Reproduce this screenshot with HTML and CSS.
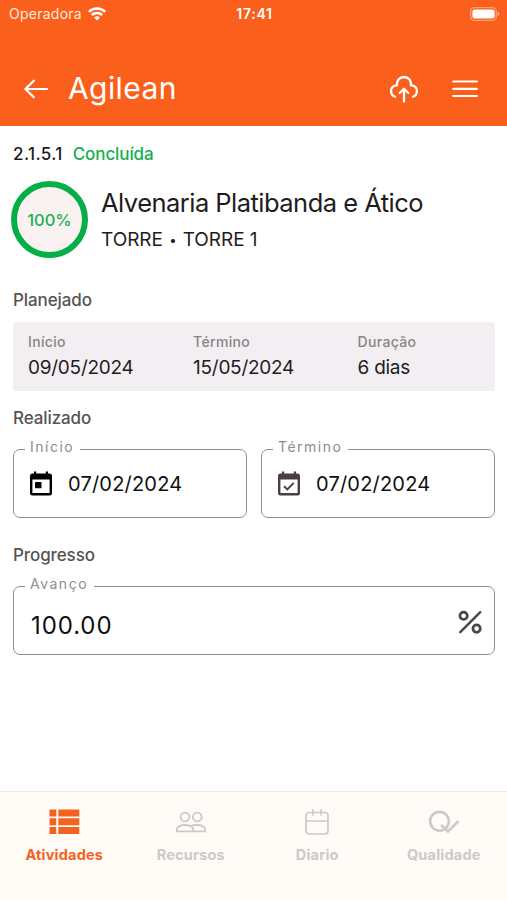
FILE: index.html
```html
<!DOCTYPE html>
<html lang="pt-BR">
<head>
    <meta charset="UTF-8">
    <title>Agilean</title>
    <meta name="viewport" content="width=device-width, initial-scale=1">
    <link rel="stylesheet" href="styles.css">
</head>
<body>
<header class="header">
    <div class="status">
        <div class="carrier">
            <span>Operadora</span>
            <svg width="18" height="14" viewBox="0 0 18 14" fill="none" stroke="#fff" stroke-width="2.5">
                <path d="M.9 4.9a11.6 11.6 0 0 1 16.2 0M3.8 8a7.5 7.5 0 0 1 10.4 0"/>
                <path d="M9 13.6 6.1 10.7a4.2 4.2 0 0 1 5.8 0z" fill="#fff" stroke="none"/>
            </svg>
        </div>
        <span class="clock">17:41</span>
        <svg class="battery" width="30" height="14" viewBox="0 0 30 14">
            <rect x=".7" y=".7" width="25.6" height="12.6" rx="3.8" fill="none" stroke="#fff" stroke-opacity=".4" stroke-width="1.3"/>
            <rect x="2.4" y="2.4" width="22.2" height="9.2" rx="2.3" fill="#fff"/>
            <path d="M27.6 4.8q3.4 2.2 0 4.4z" fill="#fff" fill-opacity=".5"/>
        </svg>
    </div>
    <div class="toolbar">
        <svg width="24" height="20" viewBox="0 0 24 20" fill="none" stroke="#fff" stroke-width="2.2" stroke-linecap="round" stroke-linejoin="round">
            <path d="M23 10H1.4M9.8 1.7 1.4 10l8.4 8.3"/>
        </svg>
        <span class="logo">Agilean</span>
        <svg class="upload" width="30" height="28" viewBox="0 0 30 28" fill="none" stroke="#fff" stroke-width="2.3" stroke-linecap="round" stroke-linejoin="round">
            <path d="M6 21.8C3.4 20.8 2 18.6 2 16c0-3.5 2.6-5.8 6-5.6C7.6 5.4 10.6 2 15 2s7.4 3.4 7 8.4c3.4-.2 6 2.1 6 5.6 0 2.6-1.4 4.8-4 5.8"/>
            <path d="M15 26.5V14M10.7 18l4.3-4.3 4.3 4.3"/>
        </svg>
        <svg width="26" height="20" viewBox="0 0 26 20" stroke="#fff" stroke-width="2.2" stroke-linecap="round">
            <path d="M1.2 2.5h23.6M1.2 9.8h23.6M1.2 17h23.6"/>
        </svg>
    </div>
</header>

<main class="content">
    <div class="code">
        <span>2.1.5.1</span>
        <span class="done">Concluída</span>
    </div>
    <div class="activity">
        <div class="progress">100%</div>
        <div>
            <h1>Alvenaria Platibanda e Ático</h1>
            <p class="place">TORRE <span class="dot">•</span> TORRE 1</p>
        </div>
    </div>

    <h2>Planejado</h2>
    <div class="planned">
        <div>
            <div class="label">Início</div>
            <div class="value">09/05/2024</div>
        </div>
        <div>
            <div class="label">Término</div>
            <div class="value">15/05/2024</div>
        </div>
        <div>
            <div class="label">Duração</div>
            <div class="value">6 dias</div>
        </div>
    </div>

    <h2>Realizado</h2>
    <div class="dates">
        <fieldset>
            <legend>Início</legend>
            <div class="field">
                <svg width="22" height="25" viewBox="0 0 22 25">
                    <path fill="#000" fill-rule="evenodd" d="M4 .5h2.2v2h9.6v-2H18v2h1.5A2.5 2.5 0 0 1 22 5v17a2.5 2.5 0 0 1-2.5 2.5h-17A2.5 2.5 0 0 1 0 22V5a2.5 2.5 0 0 1 2.5-2.5H4zM2.4 8.5v13.6h17.2V8.5z"/>
                    <rect x="5" y="11" width="6.5" height="6.2" rx=".8"/>
                </svg>
                <span>07/02/2024</span>
            </div>
        </fieldset>
        <fieldset>
            <legend>Término</legend>
            <div class="field">
                <svg width="22" height="25" viewBox="0 0 22 25">
                    <path fill="#4a4040" fill-rule="evenodd" d="M4 .5h2.2v2h9.6v-2H18v2h1.5A2.5 2.5 0 0 1 22 5v17a2.5 2.5 0 0 1-2.5 2.5h-17A2.5 2.5 0 0 1 0 22V5a2.5 2.5 0 0 1 2.5-2.5H4zM2.4 8.5v13.6h17.2V8.5z"/>
                    <path d="m6 15.3 3.3 3.2 6.5-6.7" fill="none" stroke="#4a4040" stroke-width="1.9"/>
                </svg>
                <span>07/02/2024</span>
            </div>
        </fieldset>
    </div>

    <h2>Progresso</h2>
    <fieldset>
        <legend>Avanço</legend>
        <div class="field amount">
            <span>100.00</span>
            <svg width="24" height="24" viewBox="0 0 24 24" fill="none" stroke="#4a4545" stroke-width="2.7" stroke-linecap="round">
                <circle cx="5.6" cy="5.8" r="3.7"/>
                <circle cx="18.6" cy="18.6" r="3.7"/>
                <path d="M2.3 22.2 22.3 2.2" stroke-width="2.4"/>
            </svg>
        </div>
    </fieldset>
</main>

<nav class="tabs">
    <a class="tab active">
        <svg width="32" height="28" viewBox="0 0 32 28" fill="currentColor">
            <path d="M1.5 1.5h6.8v7H1.5zM10.3 1.5h21v7h-21zM1.5 10.2h6.8v7H1.5zM10.3 10.2h21v7h-21zM1.5 19h6.8v7H1.5zM10.3 19h21v7h-21z"/>
        </svg>
        <span>Atividades</span>
    </a>
    <a class="tab">
        <svg width="32" height="28" viewBox="0 0 32 28" fill="none" stroke="currentColor" stroke-width="1.9">
            <circle cx="10" cy="9" r="4.4"/>
            <circle cx="22.3" cy="9" r="4.4"/>
            <path d="M1.8 23.4v-2c0-2.4 3.6-4.4 8-4.4s8.4 2 8.4 4.4v2zM15.3 18.1c1.6-.8 4.2-1.1 6.6-1.1 4.6 0 8.3 2 8.3 4.4v2h-12"/>
        </svg>
        <span>Recursos</span>
    </a>
    <a class="tab">
        <svg width="32" height="28" viewBox="0 0 32 28" fill="none" stroke="currentColor" stroke-width="1.7">
            <rect x="5" y="4.500" width="22" height="21.5" rx="3"/>
            <path d="M5 13h22M12 1.2v6.4M20 1.2v6.4"/>
        </svg>
        <span>Diario</span>
    </a>
    <a class="tab">
        <svg width="32" height="28" viewBox="0 0 32 28" fill="none" stroke="currentColor" stroke-width="2.6">
            <circle cx="11.5" cy="13.3" r="9.4"/>
            <path d="m13 17 7 6.5L30.5 13"/>
        </svg>
        <span>Qualidade</span>
    </a>
</nav>
</body>
</html>
```
FILE: styles.css
```css
* {
    box-sizing: border-box;
}

body {
    margin: 0;
    height: 900px;
    display: flex;
    flex-direction: column;
    background: #fff;
    color: #1f1c1e;
    font-family: Inter, "Liberation Sans", sans-serif;
}

svg {
    display: block;
    flex: none;
}

h1, h2, p {
    margin: 0;
}

.header {
    height: 126px;
    background: #fa5f1c;
    color: #fff;
}

.status {
    display: grid;
    grid-template-columns: 1fr auto 1fr;
    align-items: center;
    height: 27px;
    padding: 0 7px 0 9px;
    font-size: 14px;
}

.carrier {
    display: flex;
    align-items: center;
    gap: 6px;
    color: #ffe9de;
    letter-spacing: .25px;
}

.clock {
    font-weight: 600;
    letter-spacing: .7px;
}

.battery {
    justify-self: end;
}

.toolbar {
    display: flex;
    align-items: center;
    height: 99px;
    padding: 25px 29px 0 24px;
}

.logo {
    margin: -3px 0 0 20px;
    font-size: 30px;
    font-weight: 400;
    letter-spacing: .4px;
    line-height: 36px;
}

.upload {
    margin: 0 33px 0 auto;
}

.content {
    flex: 1;
    padding: 18px 12px 0 13px;
}

.code {
    display: flex;
    gap: 10px;
    font-size: 17px;
    font-weight: 500;
    letter-spacing: -.1px;
    line-height: 20px;
}

.code span:first-child {
    letter-spacing: .4px;
}

.done {
    color: #14b04b;
}

.activity {
    display: flex;
    gap: 13px;
    margin: 17px 0 0 -2px;
}

.progress {
    display: flex;
    align-items: center;
    justify-content: center;
    width: 77px;
    height: 77px;
    border: 6px solid #06ae47;
    border-radius: 50%;
    background: #faf2f0;
    color: #22af52;
    font-size: 16.5px;
    font-weight: 500;
}

h1 {
    padding-top: 6px;
    font-size: 25.5px;
    font-weight: 400;
    letter-spacing: -.53px;
    line-height: 32px;
}

.place {
    margin-top: 9px;
    font-size: 19px;
    letter-spacing: -.05px;
    line-height: 24px;
}

.dot {
    margin: 0 1px;
    font-size: 13px;
    line-height: 1;
    vertical-align: 1px;
}

h2 {
    color: #575352;
    font-size: 17px;
    font-weight: 500;
    letter-spacing: -.1px;
    line-height: 20px;
}

.activity + h2 {
    margin-top: 32px;
}

.planned {
    display: grid;
    grid-template-columns: 165px 164.5px 1fr;
    height: 69px;
    margin: 12px 0 17px;
    padding: 10px 15px 0;
    border-radius: 4px;
    background: #f3eef2;
}

.label {
    color: #8a8384;
    font-size: 14px;
    font-weight: 500;
    letter-spacing: .35px;
    line-height: 20px;
}

.value {
    margin-top: 3px;
    font-size: 19px;
    letter-spacing: -.25px;
    line-height: 25px;
}

.dates {
    display: grid;
    grid-template-columns: 1fr 1fr;
    gap: 14px;
    margin-bottom: 27px;
}

fieldset {
    min-width: 0;
    height: 79px;
    margin: 11px 0 0;
    padding: 0;
    border: 1px solid #8f8f8f;
    border-radius: 7px;
}

legend {
    height: 20px;
    margin-left: 11px;
    padding: 0 6px 0 5px;
    color: #8d8d8d;
    font-size: 14px;
    letter-spacing: 1.5px;
    line-height: 15px;
}

.field {
    display: flex;
    align-items: center;
    gap: 16px;
    height: 48px;
    padding: 0 11px 0 16px;
    color: #101010;
    font-size: 20px;
    letter-spacing: .2px;
}

.field span {
    padding-top: 1px;
}

.amount {
    justify-content: space-between;
    height: 52px;
    padding: 0 12px 0 17px;
    font-size: 24px;
    letter-spacing: .9px;
}

.amount span {
    padding-top: 6px;
}

.tabs {
    display: grid;
    grid-template-columns: repeat(4, 1fr);
    height: 109px;
    padding-left: 1px;
    border-top: 1px solid #fde6dc;
    background: #fffbf7;
}

.tab {
    display: flex;
    flex-direction: column;
    align-items: center;
    gap: 9px;
    padding-top: 16px;
    color: #cbcac8;
    font-size: 14.500px;
    font-weight: 700;
    letter-spacing: .2px;
    line-height: 20px;
}

.active {
    color: #f4621f;
}
```
